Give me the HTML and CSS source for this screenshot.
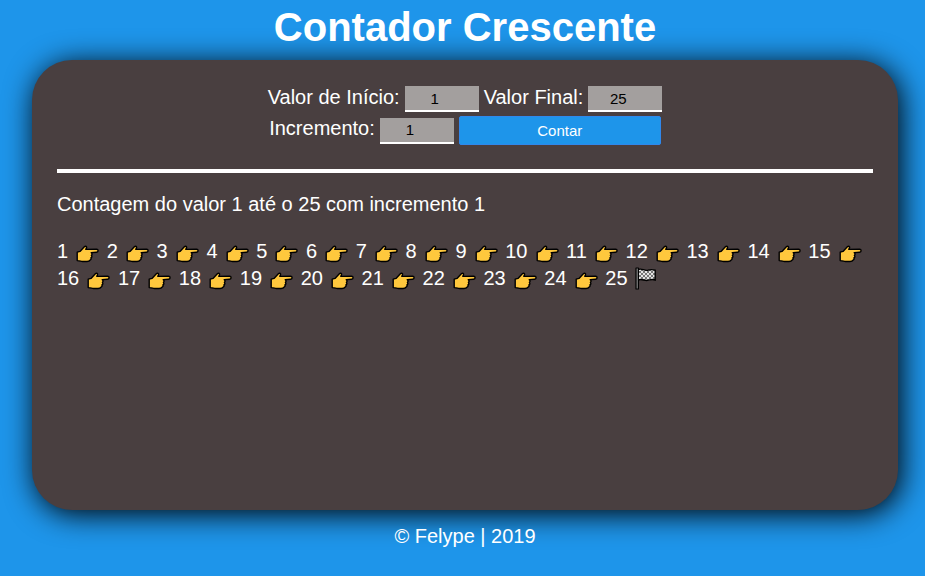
FILE: index.html
```html
<!DOCTYPE html>
<html lang="pt-br">
<head>
  <meta charset="UTF-8">
  <meta name="viewport" content="width=device-width, initial-scale=1">
  <title>Contador Crescente</title>
  <link rel="stylesheet" href="styles.css">
</head>
<body>
  <svg class="symbols" aria-hidden="true">
    <symbol id="hand" viewBox="0 0 23 18">
      <path d="M1.2 7.2 4 6.4 8.6 1.6C9.6.7 11 1.6 10.5 2.9L9.8 4.4 20.6 4.3C22.6 4.4 22.6 7.1 20.6 7.2L15.2 7.6C16.4 8.4 16.3 9.8 15.4 10.3 16.2 11.3 15.9 12.4 14.9 12.9 15.4 13.9 14.9 14.8 14 15.1 13.4 16.4 12.3 16.5 11 16.5H6.5C4.7 16.5 4.2 15.6 1.2 15.6Z" fill="#ffc83d" stroke="#000" stroke-width="1.4" stroke-linejoin="round"/>
    </symbol>
    <symbol id="flag" viewBox="0 0 22 23">
      <defs>
        <pattern id="checks" width="4" height="4" patternUnits="userSpaceOnUse">
          <rect width="4" height="4" fill="#e4e4e4"/>
          <rect width="2" height="2" fill="#777"/>
          <rect x="2" y="2" width="2" height="2" fill="#777"/>
        </pattern>
      </defs>
      <path d="M3 2.5C7 .8 9 4.2 13 3.2 15.5 2.4 17 2.2 20.2 3.2V13C17 11.6 15 13 12.5 13.4 9 13.8 7 11.5 3 13Z" fill="url(#checks)" stroke="#000" stroke-width="1.4"/>
      <path d="M1 1H3.4V22H1Z" fill="#888" stroke="#000" stroke-width="1.2" stroke-linejoin="round"/>
    </symbol>
  </svg>

  <header>
    <h1>Contador Crescente</h1>
  </header>

  <main class="card">
    <form class="form">
      <div class="row">
        <label for="inicio">Valor de Início:</label>
        <input type="number" id="inicio" value="1">
        <label for="fim">Valor Final:</label>
        <input type="number" id="fim" value="25">
      </div>
      <div class="row">
        <label for="incremento">Incremento:</label>
        <input type="number" id="incremento" value="1">
        <button type="button">Contar</button>
      </div>
    </form>
    <hr>
    <p class="summary">Contagem do valor 1 até o 25 com incremento 1</p>
    <p class="count" id="contagem"></p>
  </main>

  <footer>© Felype | 2019</footer>
  <script src="script.js"></script>
</body>
</html>
```
FILE: styles.css
```css
* {
  box-sizing: border-box;
}

body {
  margin: 0;
  padding: 4px 0 0 5px;
  background: #1e95ea;
  color: #fff;
  font: 20px/23px Arial, "Liberation Sans", sans-serif;
}

.symbols {
  position: absolute;
  width: 0;
  height: 0;
}

h1 {
  margin: 0 0 10px;
  font-size: 40px;
  line-height: 46px;
  text-align: center;
}

.card {
  min-height: 450px;
  margin: 0 27px;
  padding: 25px;
  border-radius: 40px;
  background: #493f40;
  box-shadow: 3px 4px 30px #000;
}

.form {
  display: flex;
  flex-direction: column;
  gap: 3px;
}

.row {
  display: flex;
  flex-wrap: wrap;
  align-items: center;
  justify-content: center;
  gap: 5px;
  min-height: 28px;
}

label {
  padding-bottom: 4px;
}

input {
  width: 74px;
  height: 26px;
  padding: 0 14px 0 0;
  border: 0;
  border-bottom: 2px solid #fff;
  background: #a39f9e;
  color: #000;
  font: 15px Arial, "Liberation Sans", sans-serif;
  text-align: center;
  appearance: textfield;
}

input::-webkit-inner-spin-button {
  display: none;
}

button {
  width: 202px;
  height: 29px;
  border: 1px solid #3088ec;
  border-radius: 2px;
  background: #1e95ea;
  color: #fff;
  font: 15px Arial, "Liberation Sans", sans-serif;
}

hr {
  height: 4px;
  margin: 24px 0 20px;
  border: 0;
  background: #fff;
}

p {
  margin: 0;
}

.count {
  margin-top: 22px;
  line-height: 27px;
}

.hand {
  width: 23px;
  height: 18px;
  margin: 0 2px 0 -3px;
  vertical-align: -5px;
}

.flag {
  width: 22px;
  height: 23px;
  margin-left: 2px;
  vertical-align: -5px;
}

footer {
  padding: 15px 0;
  text-align: center;
}
```
FILE: script.js
```js
const inicio = Number(document.getElementById("inicio").value);
const fim = Number(document.getElementById("fim").value);
const incremento = Number(document.getElementById("incremento").value);
const hand = '&nbsp;<svg class="hand" role="img" aria-label="próximo"><use href="#hand"/></svg>';
const flag = '<svg class="flag" role="img" aria-label="fim"><use href="#flag"/></svg>';

let html = "";
for (let n = inicio; n <= fim; n += incremento) {
  html += n + (n + incremento <= fim ? "&nbsp;" + hand + " " : "&nbsp;" + flag);
}
document.getElementById("contagem").innerHTML = html;
```
